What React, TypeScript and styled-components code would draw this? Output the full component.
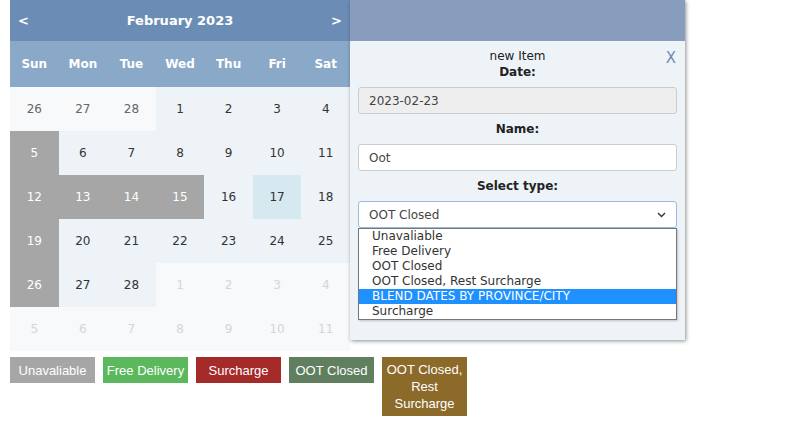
import React from "react";
import styled, { createGlobalStyle } from "styled-components";

const G = createGlobalStyle`
  body { margin: 0; background: #fff; font-family: Tahoma, "DejaVu Sans", Verdana, sans-serif; }
`;
const Page = styled.div`padding: 0 0 0 10px;`;
const Row = styled.div`display: flex; align-items: flex-start;`;
const Cal = styled.div`width: 340px; background: #f7f9fb;`;
const Head = styled.div`
  height: 41px; background: #6b8db5; color: #fff; display: flex; align-items: center;
  justify-content: space-between; padding: 0 8px; font-weight: bold; font-size: 13px;
`;
const Grid = styled.div`display: grid; grid-template-columns: repeat(7, 1fr);`;
const Wd = styled.div`
  height: 46px; background: #8aa8c8; color: #fff; font-weight: bold; font-size: 12px;
  display: flex; align-items: center; justify-content: center;
`;
const Cell = styled.div<{ $k: string }>`
  height: 44px; display: flex; align-items: center; justify-content: center; font-size: 12px;
  background: ${p => p.$k === "g" ? "#a6a6a6" : p.$k === "s" ? "#d6e8f0" : p.$k === "c" ? "#eef3f8" : "#f7f9fb"};
  color: ${p => p.$k === "g" ? "#fff" : p.$k === "n" ? "#d2d6da" : p.$k === "p" ? "#666" : "#333"};
`;
const Modal = styled.div`
  width: 335px; height: 340px; background: #eef3f8; box-shadow: 1px 1px 4px rgba(0,0,0,0.45);
  display: flex; flex-direction: column;
`;
const MHead = styled.div`height: 41px; background: #889dbe;`;
const MBody = styled.div`position: relative; padding: 7px 8px 0; display: flex; flex-direction: column; align-items: center; font-size: 12px; color: #222;`;
const Close = styled.div`position: absolute; right: 9px; top: 8px; color: #6b8db5; font-size: 15px; font-family: "DejaVu Sans", sans-serif;`;
const Label = styled.div<{ $b?: boolean }>`font-weight: ${p => p.$b ? "bold" : "normal"}; line-height: 16px; height: 16px;`;
const Input = styled.div<{ $gray?: boolean; $focus?: boolean }>`
  align-self: stretch; height: 27px; box-sizing: border-box; border: 1px solid ${p => p.$focus ? "#9bbbe3" : "#ccc"};
  border-radius: 3px; background: ${p => p.$gray ? "#eee" : "#fff"}; display: flex; align-items: center;
  padding: 0 10px; font-size: 12px; color: #444; margin: 7px 0 7px; justify-content: space-between;
`;
const List = styled.div`
  align-self: stretch; margin-top: -7px; border: 1px solid #777; background: #fff; font-size: 12px; color: #333;
  box-shadow: 1px 1px 2px rgba(0,0,0,0.2);
`;
const Opt = styled.div<{ $sel?: boolean }>`
  height: 15px; line-height: 15px; padding-left: 13px;
  background: ${p => p.$sel ? "#1e90ff" : "#fff"}; color: ${p => p.$sel ? "#fff" : "#333"};
`;
const Legend = styled.div`display: flex; gap: 8px; margin-top: 6px; align-items: flex-start;`;
const Tag = styled.div<{ $c: string; $tall?: boolean }>`
  width: 85px; box-sizing: border-box; min-height: 26px; background: ${p => p.$c}; color: #fff;
  font-family: "Liberation Sans", Arial, sans-serif; font-size: 13px; text-align: center;
  display: flex; align-items: center; justify-content: center; padding: ${p => p.$tall ? "4px 2px" : "0"};
  line-height: 17px;
`;

const wds = ["Sun","Mon","Tue","Wed","Thu","Fri","Sat"];
const rows: [number,string][][] = [
  [[26,"p"],[27,"p"],[28,"p"],[1,"c"],[2,"c"],[3,"c"],[4,"c"]],
  [[5,"g"],[6,"c"],[7,"c"],[8,"c"],[9,"c"],[10,"c"],[11,"c"]],
  [[12,"g"],[13,"g"],[14,"g"],[15,"g"],[16,"c"],[17,"s"],[18,"c"]],
  [[19,"g"],[20,"c"],[21,"c"],[22,"c"],[23,"c"],[24,"c"],[25,"c"]],
  [[26,"g"],[27,"c"],[28,"c"],[1,"n"],[2,"n"],[3,"n"],[4,"n"]],
  [[5,"n"],[6,"n"],[7,"n"],[8,"n"],[9,"n"],[10,"n"],[11,"n"]],
];

export default function App() {
  return (
    <Page>
      <G />
      <Row>
        <Cal>
          <Head><span>&lt;</span><span>February 2023</span><span>&gt;</span></Head>
          <Grid>
            {wds.map(w => <Wd key={w}>{w}</Wd>)}
            {rows.flat().map(([d,k],i) => <Cell key={i} $k={k}>{d}</Cell>)}
          </Grid>
        </Cal>
        <Modal>
          <MHead />
          <MBody>
            <Close>X</Close>
            <Label>new Item</Label>
            <Label $b>Date:</Label>
            <Input $gray>2023-02-23</Input>
            <Label $b>Name:</Label>
            <Input>Oot</Input>
            <Label $b>Select type:</Label>
            <Input $focus><span>OOT Closed</span><svg width="9" height="6" viewBox="0 0 9 6"><path d="M1 1l3.5 3.5L8 1" stroke="#333" strokeWidth="1.4" fill="none"/></svg></Input>
            <List>
              <Opt>Unavaliable</Opt>
              <Opt>Free Delivery</Opt>
              <Opt>OOT Closed</Opt>
              <Opt>OOT Closed, Rest Surcharge</Opt>
              <Opt $sel>BLEND DATES BY PROVINCE/CITY</Opt>
              <Opt>Surcharge</Opt>
            </List>
          </MBody>
        </Modal>
      </Row>
      <Legend>
        <Tag $c="#a6a6a6">Unavaliable</Tag>
        <Tag $c="#5cb85c">Free Delivery</Tag>
        <Tag $c="#a52a2a">Surcharge</Tag>
        <Tag $c="#5f7f5f">OOT Closed</Tag>
        <Tag $c="#8b6a2a" $tall>OOT Closed, Rest Surcharge</Tag>
      </Legend>
    </Page>
  );
}
